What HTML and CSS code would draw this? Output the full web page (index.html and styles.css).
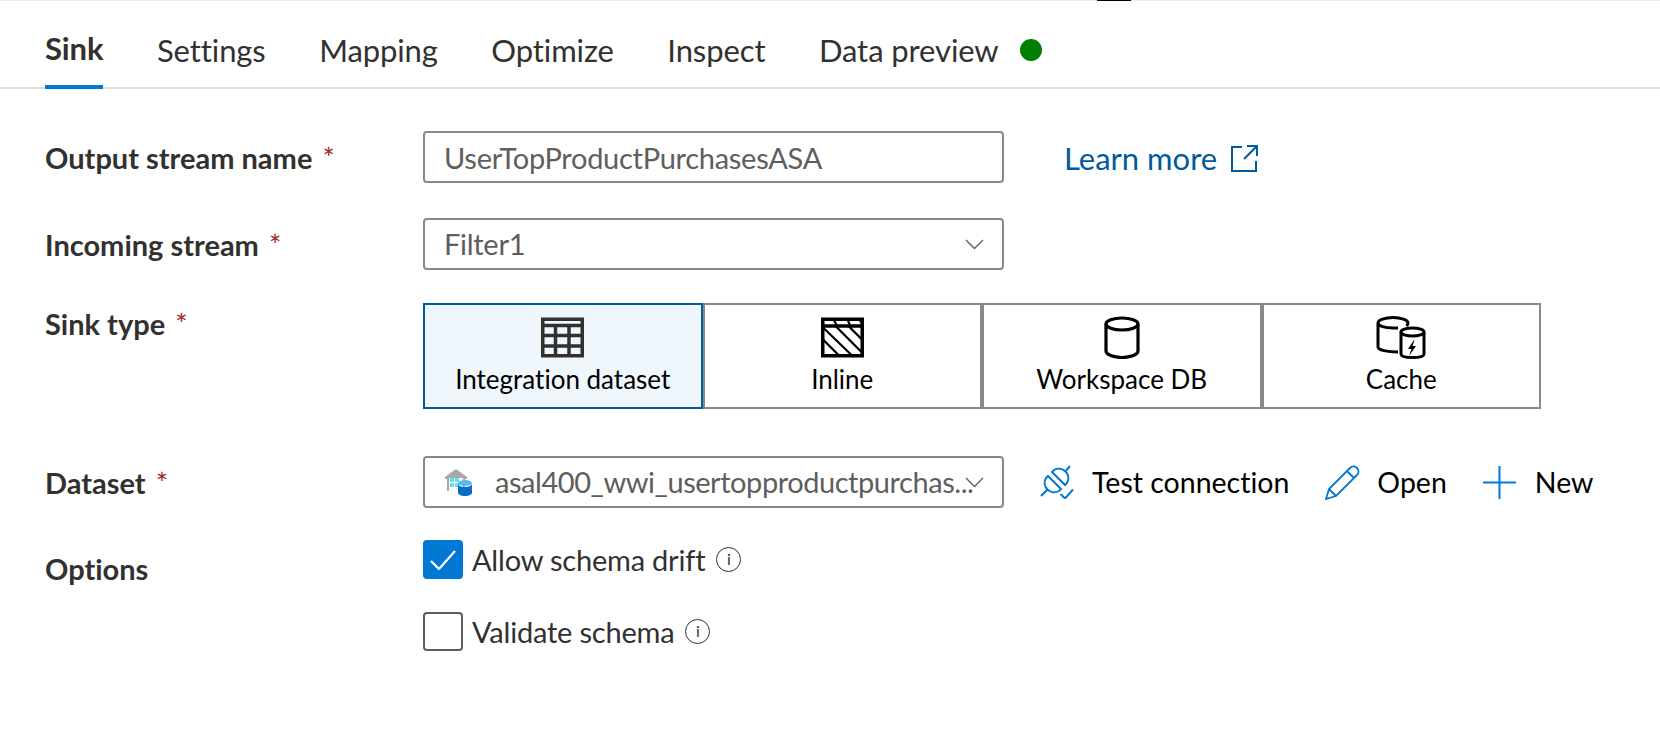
FILE: index.html
```html
<!DOCTYPE html>
<html lang="en">
<head>
    <meta charset="UTF-8">
    <title>Sink settings</title>
    <link rel="stylesheet" href="styles.css">
</head>
<body>
    <div class="top-line"><span class="top-mark"></span></div>
    <nav class="tabs">
        <a class="tab tab-active">Sink</a>
        <a class="tab">Settings</a>
        <a class="tab">Mapping</a>
        <a class="tab">Optimize</a>
        <a class="tab">Inspect</a>
        <a class="tab">Data preview<span class="status-dot"></span></a>
    </nav>
    <main class="form">
        <div class="row row-name">
            <label class="field-label">Output stream name <span class="req">*</span></label>
            <div class="text-box">UserTopProductPurchasesASA</div>
            <a class="learn-more">Learn more
                <svg width="27" height="27" viewBox="0 0 27 27" fill="none" stroke="#005a9e" stroke-width="2"><path d="M11 2H1v24h24V16M16 1h10v10M26 1 13 14"/></svg>
            </a>
        </div>
        <div class="row row-incoming">
            <label class="field-label">Incoming stream <span class="req">*</span></label>
            <div class="text-box select-box">Filter1
                <svg class="chevron" width="19" height="11" viewBox="0 0 19 11" fill="none" stroke="#605e5c" stroke-width="1.4"><path d="M1 1l8.500 8.500L18 1"/></svg>
            </div>
        </div>
        <div class="row row-sink">
            <label class="field-label field-label-sink">Sink type <span class="req">*</span></label>
            <div class="sink-types">
                <div class="sink-card sink-card-active">
                    <svg width="43" height="40" viewBox="0 0 43 40" fill="none" stroke="#323130" stroke-width="3.500"><path d="M1.750 1.750h39.500v36.500H1.750zM1.750 8h39.500M1.750 18h39.500M1.750 28.500h39.500M14.500 8v30M28 8v30"/></svg>
                    <span>Integration dataset</span>
                </div>
                <div class="sink-card">
                    <svg width="43" height="40" viewBox="0 0 43 40" fill="none" stroke="#000" stroke-width="3.500"><path d="M1.750 1.750h39.500v36.500H1.750zM1.750 8.500h39.500"/><path stroke-width="2.200" d="M2 10l29 28M14 8l28 28M27 8l15 15M2 22l15 15M13 3l3 5M27 3l2 5M39 3l2 3"/></svg>
                    <span>Inline</span>
                </div>
                <div class="sink-card">
                    <svg width="36" height="43" viewBox="0 0 36 43" fill="none" stroke="#000" stroke-width="3.200"><ellipse cx="18" cy="8" rx="16" ry="6"/><path d="M2 8v27c0 3.500 7 6.500 16 6.500s16-3 16-6.500V8"/></svg>
                    <span>Workspace DB</span>
                </div>
                <div class="sink-card">
                    <svg width="50" height="43" viewBox="0 0 50 43" fill="none" stroke="#000" stroke-width="3"><path d="M22 36C11 36 2 34 2 31V7c0-3 7-5.500 15-5.500S32 4 32 7c0 1-.5 2-1.500 3M2 7c0 3 7 5 15 5h5"/><ellipse cx="36.500" cy="16" rx="11.500" ry="4"/><path d="M25 16v22c0 2.500 5 3.500 11.500 3.500S48 40.500 48 38V16"/><path fill="#000" stroke="none" d="M38 24l-6 9h3.500L33 40l7-10h-3.500l2-6z"/></svg>
                    <span>Cache</span>
                </div>
            </div>
        </div>
        <div class="row row-dataset">
            <label class="field-label">Dataset <span class="req">*</span></label>
            <div class="text-box select-box dataset-box">
                <svg class="ds-icon" width="27" height="27" viewBox="0 0 27 27">
                    <path fill="#a8a8a8" d="M0 8 11 0l11 8v2h-2v12H2V10H0z"/>
                    <path fill="#fff" d="M4 9h14v13H4z"/>
                    <path fill="#5fe0f5" d="M5 9h4v4H5zM10 9h4v4h-4zM5 14h4v4H5zM10 14h4v4h-4z"/>
                    <ellipse cx="20" cy="14" rx="7" ry="3" fill="#5fb8e8"/>
                    <path fill="#0a6cc4" d="M13 15c0 1.500 3 3 7 3s7-1.500 7-3v9c0 1.500-3 3-7 3s-7-1.500-7-3z"/>
                </svg>
                <span class="ds-name">asal400_wwi_usertopproductpurchas...</span>
                <svg class="chevron chevron-over" width="19" height="11" viewBox="0 0 19 11" fill="none" stroke="#605e5c" stroke-width="1.4"><path d="M1 1l8.500 8.500L18 1"/></svg>
            </div>
            <div class="actions">
                <a class="action action-test">
                    <svg width="34" height="34" viewBox="0 0 34 34" fill="none" stroke="#0078d4" stroke-width="2"><path d="M8 11l13 13-2 2A9.500 9.500 0 0 1 6 13zM12 7l13 13 2-2A9.500 9.500 0 0 0 14 5zM7.500 24.500 1 31M25 7l5-6M20.500 29l4.500 4.500 8-9"/></svg>
                    Test connection
                </a>
                <a class="action action-open">
                    <svg width="36" height="35" viewBox="0 0 36 35" fill="none" stroke="#0078d4" stroke-width="1.800"><path d="M1 34l3-10L25 3c2-2 5-2 7 0s2 5 0 7L11 31zM4 24l7 7M22 6l7 7"/></svg>
                    Open
                </a>
                <a class="action action-new">
                    <svg width="33" height="33" viewBox="0 0 33 33" fill="none" stroke="#0078d4" stroke-width="2"><path d="M0 16.500h33M16.500 0v33"/></svg>
                    New
                </a>
            </div>
        </div>
        <div class="row row-options">
            <label class="field-label field-label-options">Options</label>
            <div class="checks">
                <div class="check-row">
                    <span class="checkbox checkbox-on">
                        <svg width="26" height="20" viewBox="0 0 26 20" fill="none" stroke="#fff" stroke-width="2.200"><path d="M1 11l8 8L25 1"/></svg>
                    </span>
                    Allow schema drift
                    <span class="info">i</span>
                </div>
                <div class="check-row">
                    <span class="checkbox"></span>
                    Validate schema
                    <span class="info">i</span>
                </div>
            </div>
        </div>
    </main>
</body>
</html>
```

FILE: styles.css
```css
* {
    box-sizing: border-box;
}

html, body {
    height: 100%;
}

body {
    margin: 0;
    background-color: #fff;
    color: #323130;
    font-family: Lato, "Open Sans", sans-serif;
    font-size: 29px;
    font-variant-ligatures: none;
    overflow: hidden;
}

.top-line {
    height: 1px;
    background-color: #edebe9;
    display: flex;
    justify-content: flex-end;
    padding-right: 529px;
}

.top-mark {
    width: 34px;
    height: 1px;
    background-color: #000;
}

.tabs {
    display: flex;
    height: 88px;
    padding-left: 45px;
    gap: 53.500px;
    border-bottom: 2px solid #e1dfdd;
}

.tab {
    display: flex;
    align-items: center;
    height: 88px;
    padding-top: 10px;
    font-size: 31px;
    letter-spacing: -0.100px;
}

.tab-active {
    font-weight: 700;
    border-bottom: 4px solid #0078d4;
}

.status-dot {
    width: 22px;
    height: 22px;
    margin-left: 21px;
    border-radius: 50%;
    background-color: green;
}

.form {
    padding-left: 45px;
}

.row {
    display: flex;
    align-items: flex-start;
}

.row-name {
    margin-top: 42px;
}

.row-incoming {
    margin-top: 33px;
}

.row-sink {
    margin-top: 33px;
}

.row-dataset {
    margin-top: 47px;
}

.row-options {
    margin-top: 32px;
}

.field-label {
    width: 378px;
    height: 52px;
    flex-shrink: 0;
    display: block;
    line-height: 54px;
    font-weight: 700;
}

.field-label-sink {
    line-height: 42px;
}

.field-label-options {
    line-height: 58px;
}

.req {
    margin-left: 3px;
    color: #a4262c;
    font-weight: 400;
}

.text-box {
    width: 581px;
    height: 52px;
    padding-left: 19px;
    border: 2px solid #8a8886;
    border-radius: 4px;
    color: #605e5c;
    line-height: 50px;
    letter-spacing: -0.280px;
    flex-shrink: 0;
}

.select-box {
    display: flex;
    align-items: center;
    justify-content: space-between;
    padding-right: 18px;
}

.learn-more {
    display: flex;
    align-items: center;
    gap: 14px;
    margin-left: 60px;
    height: 54px;
    color: #005a9e;
    font-size: 31px;
}

.sink-types {
    display: flex;
    width: 1118px;
}

.sink-card {
    flex: 1;
    height: 106px;
    padding-top: 11px;
    border: 2px solid #8a8886;
    display: flex;
    flex-direction: column;
    align-items: center;
    color: #000;
    font-size: 26px;
    line-height: 36px;
}

.sink-card svg {
    height: 43px;
    margin-bottom: 2px;
    flex-shrink: 0;
}

.sink-card-active {
    background-color: #eff6fc;
    border-color: #005a9e;
}

.dataset-box {
    letter-spacing: -0.450px;
}

.ds-icon {
    flex-shrink: 0;
    margin-left: 1px;
}

.ds-name {
    flex: 1;
    min-width: 0;
    margin-left: 23px;
    white-space: nowrap;
}

.chevron {
    flex-shrink: 0;
}

.chevron-over {
    margin-left: -14px;
}

.actions {
    display: flex;
    height: 52px;
    margin-left: 36px;
    color: #000;
    font-size: 28.500px;
}

.action {
    display: flex;
    align-items: center;
    gap: 18px;
}

.action-open {
    margin-left: 36px;
    gap: 16px;
}

.action-new {
    margin-left: 36px;
    gap: 19px;
}

.checks {
    display: flex;
    flex-direction: column;
    gap: 33px;
}

.check-row {
    display: flex;
    align-items: center;
    height: 39px;
    letter-spacing: -0.200px;
}

.checkbox {
    width: 40px;
    height: 39px;
    margin-right: 9px;
    border: 2px solid #605e5c;
    border-radius: 4px;
    display: flex;
    align-items: center;
    justify-content: center;
}

.checkbox-on {
    background-color: #0078d4;
    border-color: #0078d4;
}

.info {
    width: 25px;
    height: 25px;
    margin-left: 11px;
    border: 1.500px solid #323130;
    border-radius: 50%;
    font-size: 16px;
    line-height: 21px;
    text-align: center;
}
```
